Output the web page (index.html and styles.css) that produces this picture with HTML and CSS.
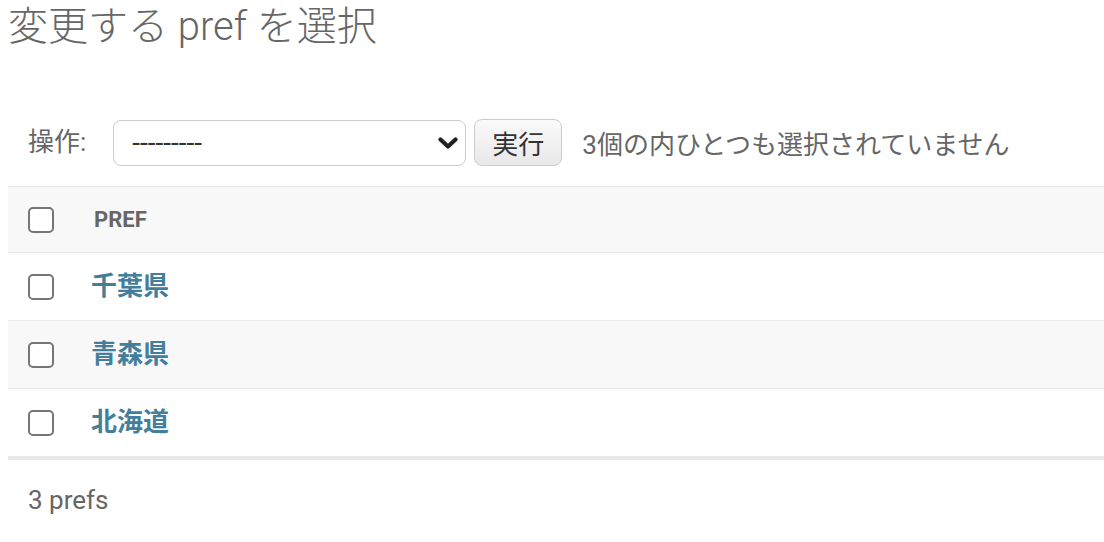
FILE: index.html
```html
<!DOCTYPE html>
<html lang="ja">
<head>
<meta charset="utf-8">
<title>変更する pref を選択</title>
<link rel="stylesheet" href="styles.css">
</head>
<body>
<div class="content">
  <h1 class="page-title">変更する pref を選択</h1>
  <div class="actions">
    <label class="actions-label" for="action">操作:</label>
    <div class="select-wrap">
      <select id="action" class="action-select">
        <option>---------</option>
      </select>
      <svg class="chevron" width="20" height="12" viewBox="0 0 20 12" aria-hidden="true">
        <polyline points="2.5,2.5 10,9.5 17.5,2.5" fill="none" stroke="#222" stroke-width="4.2" stroke-linecap="round" stroke-linejoin="round"/>
      </svg>
    </div>
    <button class="go-button" type="button">実行</button>
    <span class="action-counter">3個の内ひとつも選択されていません</span>
  </div>
  <table class="result-list">
    <thead>
      <tr>
        <th class="col-check"><input type="checkbox" class="cb"></th>
        <th class="col-name"><span class="th-text">PREF</span></th>
      </tr>
    </thead>
    <tbody>
      <tr class="row1">
        <td class="col-check"><input type="checkbox" class="cb"></td>
        <th class="col-name"><a href="#" class="rec-link">千葉県</a></th>
      </tr>
      <tr class="row2">
        <td class="col-check"><input type="checkbox" class="cb"></td>
        <th class="col-name"><a href="#" class="rec-link">青森県</a></th>
      </tr>
      <tr class="row1 last">
        <td class="col-check"><input type="checkbox" class="cb"></td>
        <th class="col-name"><a href="#" class="rec-link">北海道</a></th>
      </tr>
    </tbody>
  </table>
  <p class="paginator">3 prefs</p>
</div>
</body>
</html>
```

FILE: styles.css
```css
html, body {
  margin: 0;
  padding: 0;
  background: #fff;
}

body {
  font-family: Roboto, "Noto Sans CJK JP", "Liberation Sans", sans-serif;
  color: #333;
}

.content {
  padding: 3px 0 0 8px;
}

.page-title {
  margin: 0;
  font-size: 40px;
  line-height: 48px;
  font-weight: 300;
  color: #666;
}

.actions {
  display: flex;
  align-items: center;
  margin-top: 68px;
  padding-left: 20px;
  height: 47px;
  color: #666;
}

.actions-label {
  font-size: 26px;
  line-height: 47px;
  color: #666;
}

.select-wrap {
  position: relative;
  margin-left: 27px;
  width: 353px;
  height: 46px;
}

.action-select {
  appearance: none;
  -webkit-appearance: none;
  width: 100%;
  height: 46px;
  margin: 0;
  padding: 0 0 0 18px;
  border: 1px solid #ccc;
  border-radius: 8px;
  background: #fff;
  font-family: Roboto, "Noto Sans CJK JP", sans-serif;
  font-size: 28px;
  color: #333;
}

.chevron {
  position: absolute;
  right: 8px;
  top: 17px;
  pointer-events: none;
}

.go-button {
  margin-left: 8px;
  height: 47px;
  padding: 0 17px;
  border: 1px solid #ccc;
  border-radius: 8px;
  background: linear-gradient(#fafafa, #e8e8e8);
  font-family: Roboto, "Noto Sans CJK JP", sans-serif;
  font-size: 26px;
  color: #333;
}

.action-counter {
  margin-left: 20px;
  font-size: 26px;
  color: #666;
}

.result-list {
  margin-top: 20px;
  width: 100%;
  border-collapse: collapse;
}

.result-list thead th {
  height: 65px;
  padding: 0;
  background: #f8f8f8;
  border-top: 1px solid #e8e8e8;
  border-bottom: 1px solid #e8e8e8;
  text-align: left;
  vertical-align: middle;
}

.th-text {
  display: block;
  padding-left: 3px;
  font-size: 22px;
  font-weight: 700;
  color: #666;
  text-transform: uppercase;
}

.result-list tbody td,
.result-list tbody th {
  height: 67px;
  padding: 0;
  border-bottom: 1px solid #e8e8e8;
  text-align: left;
  vertical-align: middle;
}

.result-list tbody th.col-name {
  padding-bottom: 6px;
  height: 61px;
}

.result-list tbody tr.last td,
.result-list tbody tr.last th {
  border-bottom: 4px solid #e8e8e8;
}

.row2 {
  background: #f8f8f8;
}

.col-check {
  width: 63px;
  padding-left: 20px !important;
}

.col-name {
  font-weight: 700;
}

.cb {
  appearance: none;
  -webkit-appearance: none;
  display: block;
  margin: 0;
  width: 26px;
  height: 26px;
  border: 2px solid #767676;
  border-radius: 5px;
  background: #fff;
}

.rec-link {
  font-size: 26px;
  font-weight: 700;
  color: #447e9b;
  text-decoration: none;
  font-family: Roboto, "Noto Sans CJK JP", sans-serif;
}

.paginator {
  margin: 0;
  padding: 18px 0 0 20px;
  font-size: 26px;
  line-height: 44px;
  color: #666;
}
```
